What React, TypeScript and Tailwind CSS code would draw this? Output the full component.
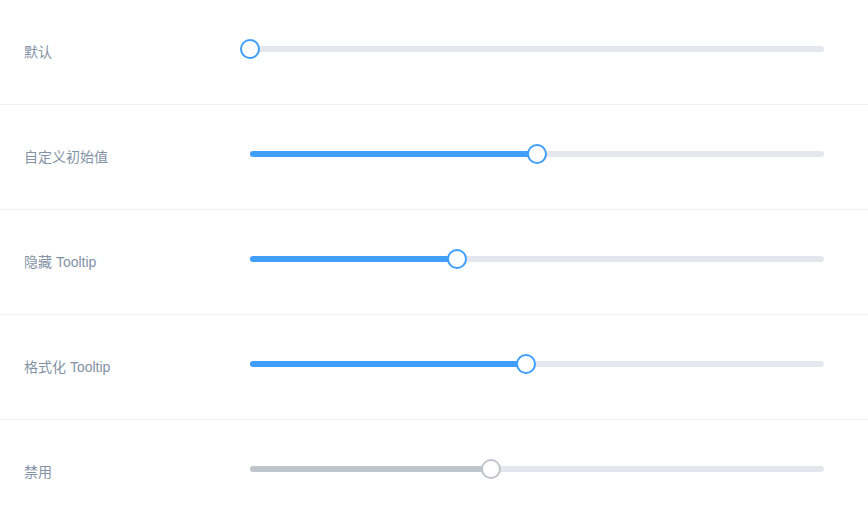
import React from 'react';

const ROWS = [
  { label: '默认', value: 0 },
  { label: '自定义初始值', value: 50 },
  { label: '隐藏 Tooltip', value: 36 },
  { label: '格式化 Tooltip', value: 48 },
  { label: '禁用', value: 42, disabled: true },
];

function Slider({ value, disabled = false }: { value: number; disabled?: boolean }) {
  return (
    <div className="w-[574px] h-[38px] flex items-center">
      <div className="relative w-full h-[6px] rounded-[3px] bg-[#e4e7ed]">
        <div
          className={`absolute left-0 top-0 h-full rounded-[3px] ${disabled ? 'bg-[#c0c4cc]' : 'bg-[#409eff]'}`}
          style={{ width: `${value}%` }}
        />
        <div
          className={`absolute top-1/2 w-5 h-5 -translate-x-1/2 -translate-y-1/2 rounded-full bg-white border-2 ${
            disabled ? 'border-[#c0c4cc]' : 'border-[#409eff]'
          }`}
          style={{ left: `${value}%` }}
        />
      </div>
    </div>
  );
}

export default function App() {
  return (
    <div
      className="w-[868px] bg-white"
      style={{ fontFamily: '"Liberation Sans", "Noto Sans CJK SC", sans-serif' }}
    >
      {ROWS.map((row) => (
        <div key={row.label} className="flex items-start px-6 py-[30px] border-b border-[#eff2f6]">
          <div className="w-[226px] text-sm leading-[44px] text-[#8492a6]">{row.label}</div>
          <Slider value={row.value} disabled={row.disabled} />
        </div>
      ))}
    </div>
  );
}
